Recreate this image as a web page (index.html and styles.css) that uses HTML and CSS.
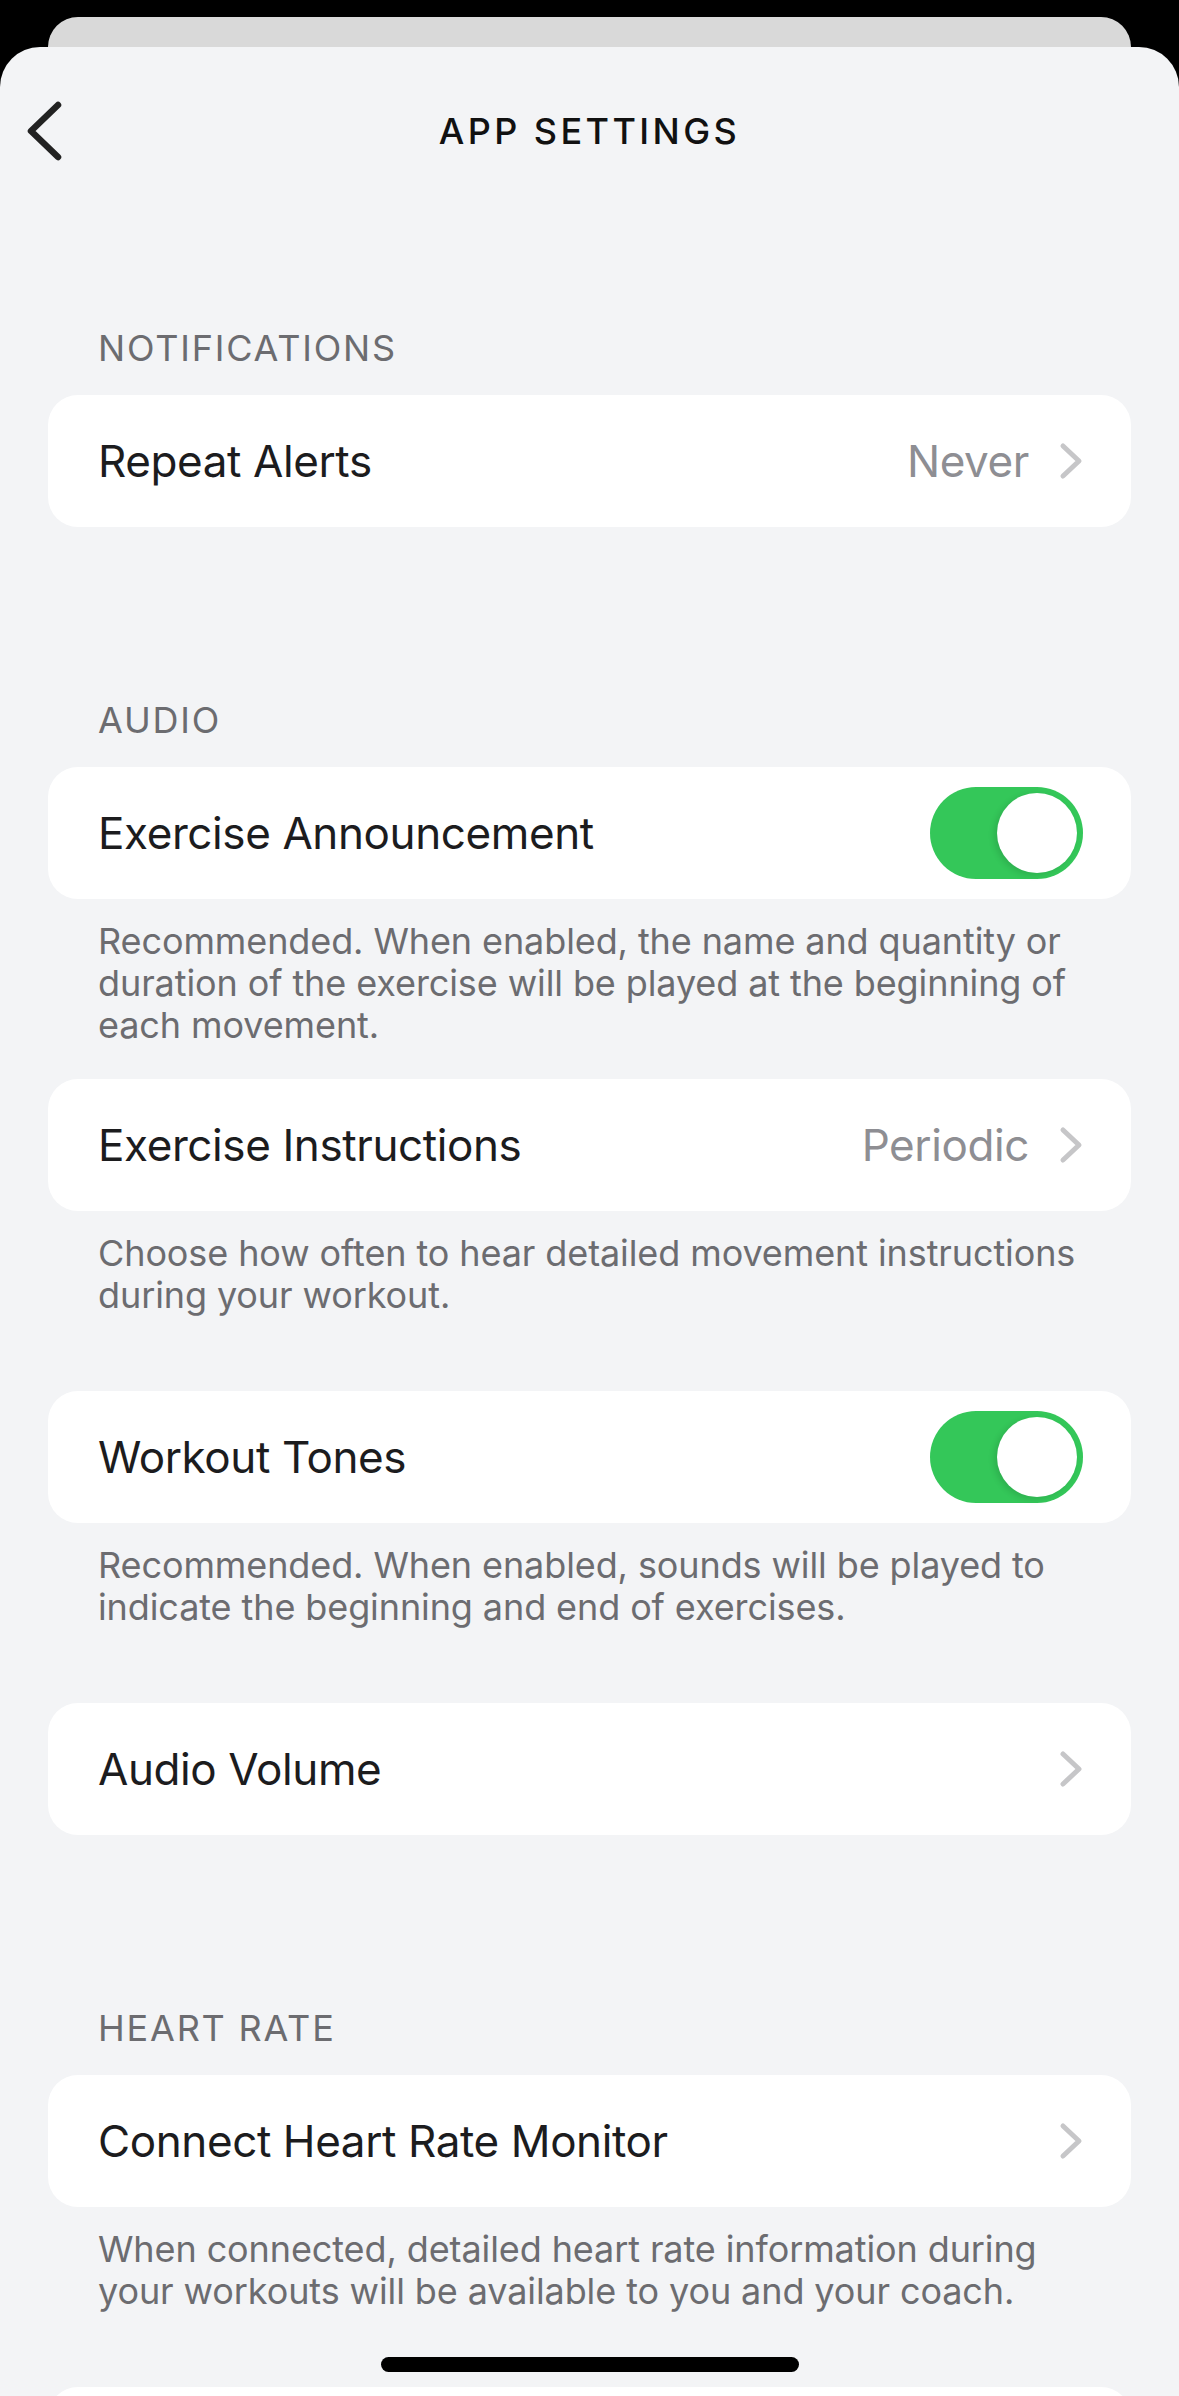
FILE: index.html
```html
<!DOCTYPE html>
<html lang="en">
<head>
    <meta charset="UTF-8">
    <meta name="viewport" content="width=device-width, initial-scale=1.0">
    <title>App Settings</title>
    <link rel="stylesheet" href="styles.css">
</head>
<body>

<div class="sheet-behind"></div>

<main class="sheet">
    <header class="nav">
        <a class="back" href="#" aria-label="Back">
            <svg width="40" height="64" viewBox="0 0 40 64">
                <polyline points="31,6 4,32 31,58" fill="none" stroke="#222" stroke-width="6.5" stroke-linecap="round" stroke-linejoin="round"/>
            </svg>
        </a>
        <h1>APP SETTINGS</h1>
        <span></span>
    </header>

    <section class="section">
        <h2 class="section-title">NOTIFICATIONS</h2>
        <div class="card">
            <span class="label">Repeat Alerts</span>
            <span class="value">Never</span>
            <svg class="chevron" width="24" height="38" viewBox="0 0 24 38">
                <polyline points="4,4 20,19 4,34" fill="none" stroke="#c6c6c8" stroke-width="5" stroke-linecap="round" stroke-linejoin="round"/>
            </svg>
        </div>
    </section>

    <section class="section">
        <h2 class="section-title">AUDIO</h2>
        <div class="card">
            <span class="label">Exercise Announcement</span>
            <span class="toggle on"><span class="knob"></span></span>
        </div>
        <p class="note">Recommended. When enabled, the name and quantity or duration of the exercise will be played at the beginning of each movement.</p>

        <div class="card">
            <span class="label">Exercise Instructions</span>
            <span class="value">Periodic</span>
            <svg class="chevron" width="24" height="38" viewBox="0 0 24 38">
                <polyline points="4,4 20,19 4,34" fill="none" stroke="#c6c6c8" stroke-width="5" stroke-linecap="round" stroke-linejoin="round"/>
            </svg>
        </div>
        <p class="note">Choose how often to hear detailed movement instructions during your workout.</p>

        <div class="card">
            <span class="label">Workout Tones</span>
            <span class="toggle on"><span class="knob"></span></span>
        </div>
        <p class="note">Recommended. When enabled, sounds will be played to indicate the beginning and end of exercises.</p>

        <div class="card">
            <span class="label">Audio Volume</span>
            <svg class="chevron" width="24" height="38" viewBox="0 0 24 38">
                <polyline points="4,4 20,19 4,34" fill="none" stroke="#c6c6c8" stroke-width="5" stroke-linecap="round" stroke-linejoin="round"/>
            </svg>
        </div>
    </section>

    <section class="section">
        <h2 class="section-title">HEART RATE</h2>
        <div class="card">
            <span class="label">Connect Heart Rate Monitor</span>
            <svg class="chevron" width="24" height="38" viewBox="0 0 24 38">
                <polyline points="4,4 20,19 4,34" fill="none" stroke="#c6c6c8" stroke-width="5" stroke-linecap="round" stroke-linejoin="round"/>
            </svg>
        </div>
        <p class="note">When connected, detailed heart rate information during your workouts will be available to you and your coach.</p>

        <div class="card"></div>
    </section>
</main>

<div class="home-indicator"></div>

</body>
</html>
```

FILE: styles.css
```css
body {
    margin: 0;
    padding: 0;
    background-color: #000;
    font-family: Inter, "Noto Sans", sans-serif;
    color: #1c1c1e;
    overflow: hidden;
}
.sheet-behind {
    margin: 17px 48px 0;
    height: 30px;
    background-color: #d9d9d9;
    border-radius: 30px 30px 0 0;
}
.sheet {
    background-color: #f3f4f6;
    border-radius: 40px 40px 0 0;
    min-height: 2400px;
}
.nav {
    height: 168px;
    display: grid;
    grid-template-columns: 1fr auto 1fr;
    align-items: center;
}
.back {
    padding-left: 27px;
    display: flex;
    align-items: center;
}
.nav h1 {
    margin: 0;
    font-size: 36px;
    font-weight: 500;
    letter-spacing: 3.4px;
    color: #111;
}
.section {
    margin-top: 172px;
}
.section:first-of-type {
    margin-top: 112px;
}
.section-title {
    margin: 0 0 26px;
    padding: 0 50px 0 98px;
    font-size: 36px;
    line-height: 42px;
    font-weight: 400;
    letter-spacing: 1.8px;
    color: #6c6c70;
}
.card {
    margin: 0 48px;
    height: 132px;
    box-sizing: border-box;
    padding: 0 48px 0 50px;
    background-color: #fff;
    border-radius: 30px;
    display: flex;
    align-items: center;
}
.label {
    flex: 1;
    font-size: 44px;
    letter-spacing: -0.4px;
}
.value {
    font-size: 44px;
    letter-spacing: -0.4px;
    color: #8e8e93;
    margin-right: 30px;
}
.chevron {
    display: block;
}
.note {
    margin: 0;
    padding: 21px 60px 0 98px;
    height: 180px;
    box-sizing: border-box;
    font-size: 36px;
    line-height: 42px;
    letter-spacing: -0.1px;
    color: #6c6c70;
}
.toggle {
    width: 153px;
    height: 92px;
    border-radius: 46px;
    background-color: #e5e5ea;
    display: flex;
    align-items: center;
    padding: 0 6px;
    box-sizing: border-box;
}
.toggle.on {
    background-color: #34c759;
    justify-content: flex-end;
}
.knob {
    width: 80px;
    height: 80px;
    border-radius: 50%;
    background-color: #fff;
    box-shadow: -3px 2px 6px rgba(0, 0, 0, 0.12);
}
.home-indicator {
    position: fixed;
    left: 50%;
    bottom: 24px;
    width: 418px;
    height: 15px;
    margin-left: -209px;
    background-color: #000;
    border-radius: 8px;
}
```
